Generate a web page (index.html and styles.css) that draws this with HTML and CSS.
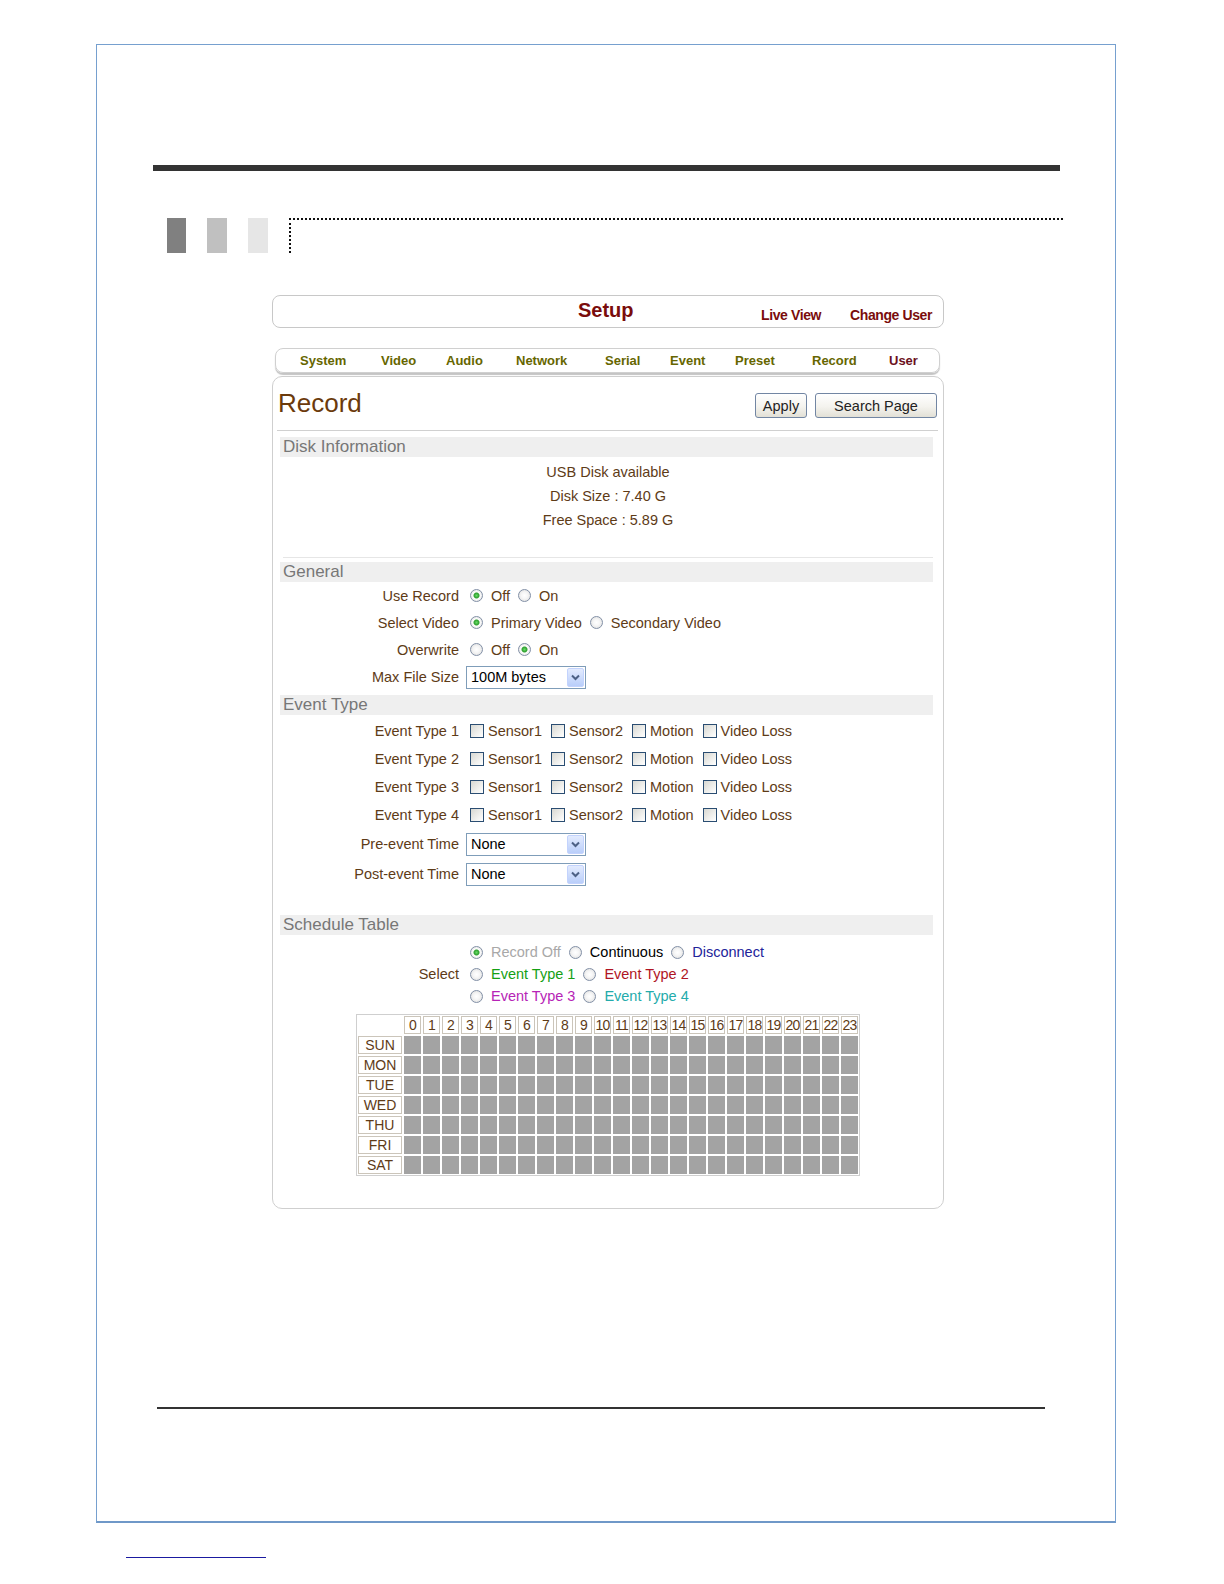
FILE: index.html
```html
<!DOCTYPE html>
<html>
<head>
<meta charset="utf-8">
<title>Record</title>
<link rel="stylesheet" href="styles.css">
</head>
<body>
<div class="page">
  <div class="topbar"></div>
  <div class="titlerow">
    <span class="blk b1"></span><span class="blk b2"></span><span class="blk b3"></span>
    <span class="titleline"></span>
  </div>
  <div class="app">
    <div class="hdr">
      <span class="setup">Setup</span>
      <span class="links"><a>Live View</a><a>Change User</a></span>
    </div>
    <div class="nav">
      <a>System</a><a>Video</a><a>Audio</a><a>Network</a><a>Serial</a><a>Event</a><a>Preset</a><a>Record</a><a class="cur">User</a>
    </div>
    <div class="main">
      <div class="mainhead">
        <h1>Record</h1>
        <div class="btns"><button class="apply">Apply</button><button class="search">Search Page</button></div>
      </div>

      <div class="sec first">Disk Information</div>
      <div class="disk">
        <p>USB Disk available</p>
        <p>Disk Size : 7.40 G</p>
        <p>Free Space : 5.89 G</p>
      </div>
      <div class="sep"></div>

      <div class="sec gen">General</div>
      <div class="row">
        <span class="lbl">Use Record</span>
        <span class="ctl">
          <label class="opt"><input type="radio" name="use" checked>Off</label>
          <label class="opt"><input type="radio" name="use">On</label>
        </span>
      </div>
      <div class="row">
        <span class="lbl">Select Video</span>
        <span class="ctl">
          <label class="opt"><input type="radio" name="vid" checked>Primary Video</label>
          <label class="opt"><input type="radio" name="vid">Secondary Video</label>
        </span>
      </div>
      <div class="row">
        <span class="lbl">Overwrite</span>
        <span class="ctl">
          <label class="opt"><input type="radio" name="ow">Off</label>
          <label class="opt"><input type="radio" name="ow" checked>On</label>
        </span>
      </div>
      <div class="row selrow">
        <span class="lbl">Max File Size</span>
        <span class="ctl sctl">
          <span class="sel"><span class="val">100M bytes</span><span class="arr"><svg width="9" height="7" viewBox="0 0 9 7"><path d="M1 1.5 L4.5 5 L8 1.5" fill="none" stroke="#4d6185" stroke-width="2"/></svg></span></span>
        </span>
      </div>

      <div class="sec evt">Event Type</div>
      <div class="evrows">
        <div class="row erow">
          <span class="lbl">Event Type 1</span>
          <span class="ctl">
            <label class="chk"><input type="checkbox">Sensor1</label>
            <label class="chk"><input type="checkbox">Sensor2</label>
            <label class="chk"><input type="checkbox">Motion</label>
            <label class="chk"><input type="checkbox">Video Loss</label>
          </span>
        </div>
        <div class="row erow">
          <span class="lbl">Event Type 2</span>
          <span class="ctl">
            <label class="chk"><input type="checkbox">Sensor1</label>
            <label class="chk"><input type="checkbox">Sensor2</label>
            <label class="chk"><input type="checkbox">Motion</label>
            <label class="chk"><input type="checkbox">Video Loss</label>
          </span>
        </div>
        <div class="row erow">
          <span class="lbl">Event Type 3</span>
          <span class="ctl">
            <label class="chk"><input type="checkbox">Sensor1</label>
            <label class="chk"><input type="checkbox">Sensor2</label>
            <label class="chk"><input type="checkbox">Motion</label>
            <label class="chk"><input type="checkbox">Video Loss</label>
          </span>
        </div>
        <div class="row erow">
          <span class="lbl">Event Type 4</span>
          <span class="ctl">
            <label class="chk"><input type="checkbox">Sensor1</label>
            <label class="chk"><input type="checkbox">Sensor2</label>
            <label class="chk"><input type="checkbox">Motion</label>
            <label class="chk"><input type="checkbox">Video Loss</label>
          </span>
        </div>
        <div class="row trow">
          <span class="lbl">Pre-event Time</span>
          <span class="ctl sctl">
            <span class="sel"><span class="val">None</span><span class="arr"><svg width="9" height="7" viewBox="0 0 9 7"><path d="M1 1.5 L4.5 5 L8 1.5" fill="none" stroke="#4d6185" stroke-width="2"/></svg></span></span>
          </span>
        </div>
        <div class="row trow">
          <span class="lbl">Post-event Time</span>
          <span class="ctl sctl">
            <span class="sel"><span class="val">None</span><span class="arr"><svg width="9" height="7" viewBox="0 0 9 7"><path d="M1 1.5 L4.5 5 L8 1.5" fill="none" stroke="#4d6185" stroke-width="2"/></svg></span></span>
          </span>
        </div>
      </div>

      <div class="sec sch">Schedule Table</div>
      <div class="schsel">
        <span class="lbl">Select</span>
        <div class="schopts">
          <div class="sline">
            <label class="opt c-off"><input type="radio" name="sch" checked>Record Off</label>
            <label class="opt c-cont"><input type="radio" name="sch">Continuous</label>
            <label class="opt c-disc"><input type="radio" name="sch">Disconnect</label>
          </div>
          <div class="sline">
            <label class="opt c-e1"><input type="radio" name="sch">Event Type 1</label>
            <label class="opt c-e2"><input type="radio" name="sch">Event Type 2</label>
          </div>
          <div class="sline">
            <label class="opt c-e3"><input type="radio" name="sch">Event Type 3</label>
            <label class="opt c-e4"><input type="radio" name="sch">Event Type 4</label>
          </div>
        </div>
      </div>

      <div class="grid">
        <span class="corner"></span>
        <span class="h">0</span><span class="h">1</span><span class="h">2</span><span class="h">3</span><span class="h">4</span><span class="h">5</span><span class="h">6</span><span class="h">7</span><span class="h">8</span><span class="h">9</span><span class="h">10</span><span class="h">11</span><span class="h">12</span><span class="h">13</span><span class="h">14</span><span class="h">15</span><span class="h">16</span><span class="h">17</span><span class="h">18</span><span class="h">19</span><span class="h">20</span><span class="h">21</span><span class="h">22</span><span class="h">23</span>
        <span class="d">SUN</span><i></i><i></i><i></i><i></i><i></i><i></i><i></i><i></i><i></i><i></i><i></i><i></i><i></i><i></i><i></i><i></i><i></i><i></i><i></i><i></i><i></i><i></i><i></i><i></i>
        <span class="d">MON</span><i></i><i></i><i></i><i></i><i></i><i></i><i></i><i></i><i></i><i></i><i></i><i></i><i></i><i></i><i></i><i></i><i></i><i></i><i></i><i></i><i></i><i></i><i></i><i></i>
        <span class="d">TUE</span><i></i><i></i><i></i><i></i><i></i><i></i><i></i><i></i><i></i><i></i><i></i><i></i><i></i><i></i><i></i><i></i><i></i><i></i><i></i><i></i><i></i><i></i><i></i><i></i>
        <span class="d">WED</span><i></i><i></i><i></i><i></i><i></i><i></i><i></i><i></i><i></i><i></i><i></i><i></i><i></i><i></i><i></i><i></i><i></i><i></i><i></i><i></i><i></i><i></i><i></i><i></i>
        <span class="d">THU</span><i></i><i></i><i></i><i></i><i></i><i></i><i></i><i></i><i></i><i></i><i></i><i></i><i></i><i></i><i></i><i></i><i></i><i></i><i></i><i></i><i></i><i></i><i></i><i></i>
        <span class="d">FRI</span><i></i><i></i><i></i><i></i><i></i><i></i><i></i><i></i><i></i><i></i><i></i><i></i><i></i><i></i><i></i><i></i><i></i><i></i><i></i><i></i><i></i><i></i><i></i><i></i>
        <span class="d">SAT</span><i></i><i></i><i></i><i></i><i></i><i></i><i></i><i></i><i></i><i></i><i></i><i></i><i></i><i></i><i></i><i></i><i></i><i></i><i></i><i></i><i></i><i></i><i></i><i></i>
      </div>
    </div>
  </div>
  <div class="botline"></div>
</div>
<div class="foot"></div>
</body>
</html>
```

FILE: styles.css
```css
* { box-sizing: border-box; }
html, body { margin: 0; padding: 0; background: #fff; }
body {
  font-family: "Liberation Sans", Arial, sans-serif;
  display: flow-root;
  padding-top: 44px;
}

.page {
  margin: 0 0 0 96px;
  width: 1020px;
  height: 1479px;
  border: 1px solid #76a0cf;
  border-bottom: 2px solid #6f98c8;
  display: flex;
  flex-direction: column;
  align-items: flex-start;
}

.topbar {
  margin: 120px 0 0 56px;
  width: 907px;
  height: 6px;
  background: #333;
}

.titlerow {
  margin: 47px 0 0 70px;
  display: flex;
  height: 35px;
}
.blk { width: 20px; height: 35px; margin-right: 21px; }
.b1 { width: 19px; background: #808080; }
.b2 { background: #c0c0c0; }
.b3 { background: #e6e6e6; }
.titleline {
  width: 774px;
  height: 35px;
  border-top: 2px dotted #111;
  border-left: 2px dotted #111;
}

.app {
  margin: 42px 0 0 175px;
  width: 672px;
}

.hdr {
  height: 33px;
  border: 1px solid #c8c8c8;
  border-radius: 8px;
  display: flex;
  align-items: center;
  padding: 0 11px 0 305px;
}
.setup {
  font-weight: bold;
  font-size: 20px;
  color: #7a0c0c;
  margin-top: -2px;
}
.links {
  margin-left: auto;
  display: flex;
  gap: 29px;
  margin-top: 6px;
}
.links a {
  font-weight: bold;
  font-size: 14px;
  letter-spacing: -0.4px;
  color: #7a0c0c;
}

.nav {
  margin: 20px 0 0 3px;
  width: 665px;
  height: 25px;
  border: 1px solid #d0d0d0;
  border-radius: 8px;
  box-shadow: 0 2px 1px #c4c4c4;
  display: grid;
  grid-template-columns: 81px 65px 70px 89px 65px 65px 77px 77px auto;
  align-items: center;
  padding-left: 24px;
}
.nav a {
  font-weight: bold;
  font-size: 13px;
  color: #666600;
}
.nav a.cur { color: #6b1020; }

.main {
  margin-top: 3px;
  width: 672px;
  height: 833px;
  border: 1px solid #cfcfcf;
  border-radius: 10px;
}

.mainhead {
  margin: 0 5px 0 4px;
  height: 54px;
  border-bottom: 1px solid #d0d0d0;
  display: flex;
  align-items: center;
  justify-content: space-between;
  padding: 0 1px;
}
.mainhead h1 {
  margin: 0;
  font-size: 26px;
  font-weight: normal;
  color: #6b3a0c;
}
.btns { display: flex; gap: 8px; margin-top: 4px; }
.btns button {
  height: 25px;
  padding: 0;
  font-family: inherit;
  font-size: 14.5px;
  color: #222;
  background: linear-gradient(#ffffff, #f4f3ee 55%, #e2e0d6);
  border: 1px solid #7286a3;
  border-radius: 3px;
}
.btns .apply { width: 52px; }
.btns .search { width: 122px; }

.sec {
  margin: 6px 10px 0 7px;
  width: 653px;
  height: 20px;
  background: #efefef;
  color: #777;
  font-size: 17px;
  line-height: 20px;
  padding-left: 3px;
}
.sec.gen { margin-top: 4px; }
.sec.evt { margin-top: 4px; }
.sec.sch { margin-top: 26px; }

.disk {
  text-align: center;
  color: #5e3b17;
  font-size: 14.5px;
  padding-top: 3px;
}
.disk p { margin: 0; line-height: 24px; }

.sep {
  margin: 25px 10px 0 10px;
  height: 1px;
  background: #e6e6e6;
}

.row {
  display: flex;
  align-items: center;
  height: 27px;
}
.row.selrow { height: 28px; }
.evrows { margin-top: 2px; }
.row.erow { height: 28px; }
.row.trow { height: 30px; }

.lbl {
  width: 186px;
  flex: none;
  text-align: right;
  color: #5e3b17;
  font-size: 14.5px;
}
.ctl {
  margin-left: 11px;
  display: flex;
  align-items: center;
}
.ctl.sctl { margin-left: 7px; }

.opt, .chk {
  display: flex;
  align-items: center;
  color: #5e3b17;
  font-size: 14.5px;
  white-space: nowrap;
}
.opt { margin-right: 8px; }
.chk { margin-right: 9px; }

input[type=radio] {
  -webkit-appearance: none;
  appearance: none;
  flex: none;
  width: 13px;
  height: 13px;
  margin: 0 8px 0 0;
  border: 1px solid #8290a6;
  border-radius: 50%;
  background: radial-gradient(circle, #ffffff 0, #f6f6f6 40%, #d9d9d9 100%);
}
input[type=radio]:checked {
  background: radial-gradient(circle, #66dd66 0, #2f9f2f 2.5px, #ffffff 3.5px, #f3f3f3 4.5px, #d9d9d9 100%);
}
input[type=checkbox] {
  -webkit-appearance: none;
  appearance: none;
  flex: none;
  width: 14px;
  height: 14px;
  margin: 0 4px 0 0;
  border: 1px solid #2a4d72;
  background: linear-gradient(135deg, #d8d8d2, #f4f4f2 70%, #ffffff);
}

.sel {
  display: flex;
  align-items: center;
  width: 120px;
  height: 23px;
  border: 1px solid #7f9db9;
  background: #fff;
}
.sel .val {
  flex: 1;
  padding-left: 4px;
  font-size: 14.5px;
  color: #000;
}
.sel .arr {
  width: 17px;
  height: 19px;
  margin-right: 1px;
  border: 1px solid #c3d3fd;
  border-radius: 2px;
  background: linear-gradient(#e3ebfe, #b9cefa);
  display: flex;
  align-items: center;
  justify-content: center;
}

.schsel {
  margin-top: 6px;
  display: flex;
  align-items: center;
}
.schopts {
  margin-left: 11px;
  display: flex;
  flex-direction: column;
}
.sline {
  height: 22px;
  display: flex;
  align-items: center;
}
.c-off { color: #a8a8a8; }
.c-cont { color: #000; }
.c-disc { color: #23239a; }
.c-e1 { color: #14a014; }
.c-e2 { color: #b01423; }
.c-e3 { color: #b624b6; }
.c-e4 { color: #24abab; }

.grid {
  margin: 7px 0 0 83px;
  width: 504px;
  display: grid;
  grid-template-columns: 44px repeat(24, 17px);
  grid-auto-rows: 18px;
  gap: 2px;
  padding: 1px;
  border: 1px solid #cfcfcf;
}
.grid .h, .grid .d {
  border: 1px solid #cbc5ba;
  color: #5e3b17;
  font-size: 14px;
  line-height: 16px;
  text-align: center;
  white-space: nowrap;
}
.grid .h { letter-spacing: -0.7px; overflow: visible; }
.grid i {
  display: block;
  background: #a3a3a3;
}

.botline {
  margin: 198px 0 0 60px;
  width: 888px;
  height: 2px;
  background: #333;
}

.foot {
  margin: 34px 0 0 126px;
  width: 140px;
  height: 1px;
  background: #1a1aa0;
}
```
